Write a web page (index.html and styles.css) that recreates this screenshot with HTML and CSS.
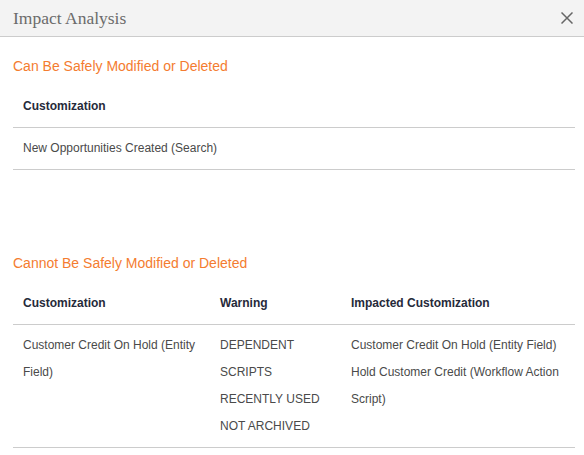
FILE: index.html
```html
<!DOCTYPE html>
<html>
<head>
<meta charset="utf-8">
<link rel="stylesheet" href="styles.css">
</head>
<body>
<div class="dialog">
  <div class="dialog-header">
    <span class="dialog-title">Impact Analysis</span>
    <button class="close-btn" aria-label="Close">
      <svg width="12" height="12" viewBox="0 0 12 12"><path d="M0.5 0.5 L11.5 11.5 M11.5 0.5 L0.5 11.5" stroke="#666" stroke-width="1.5" fill="none"/></svg>
    </button>
  </div>
  <div class="dialog-body">
    <section class="section">
      <h2 class="section-title">Can Be Safely Modified or Deleted</h2>
      <table class="grid">
        <thead><tr><th>Customization</th></tr></thead>
        <tbody><tr><td>New Opportunities Created (Search)</td></tr></tbody>
      </table>
    </section>
    <section class="section section-gap">
      <h2 class="section-title">Cannot Be Safely Modified or Deleted</h2>
      <table class="grid fixed">
        <colgroup><col class="c1"><col class="c2"><col class="c3"></colgroup>
        <thead><tr><th>Customization</th><th>Warning</th><th>Impacted Customization</th></tr></thead>
        <tbody><tr>
          <td>Customer Credit On Hold (Entity Field)</td>
          <td>DEPENDENT<br>SCRIPTS<br>RECENTLY USED<br>NOT ARCHIVED</td>
          <td>Customer Credit On Hold (Entity Field)<br>Hold Customer Credit (Workflow Action Script)</td>
        </tr></tbody>
      </table>
    </section>
  </div>
</div>
</body>
</html>
```
FILE: styles.css
```css
html, body { margin: 0; padding: 0; background: #fff; }
body { font-family: "Liberation Sans", Arial, sans-serif; }
.dialog { width: 584px; height: 455px; overflow: hidden; }
.dialog-header {
  height: 36px;
  background: #f3f3f3;
  border-bottom: 1px solid #cccccc;
  display: flex;
  align-items: center;
  justify-content: space-between;
  padding: 0 11px 0 13px;
}
.dialog-title {
  font-family: "Liberation Serif", "Times New Roman", serif;
  font-size: 17.5px;
  color: #6b6b6b;
  line-height: 20px;
  padding-bottom: 1px;
}
.close-btn {
  border: 0; background: none; padding: 0; width: 12px; height: 12px;
  display: flex;
}
.dialog-body { padding: 19px 9px 0 13px; }
.section-title {
  margin: 0;
  font-size: 14px;
  font-weight: normal;
  line-height: 20px;
  color: #f47c30;
}
.section-gap { margin-top: 83px; }
.grid { width: 562px; border-collapse: collapse; margin-top: 7px; }
.grid.fixed { table-layout: fixed; }
.c1 { width: 197px; }
.c2 { width: 131px; }
.c3 { width: 234px; }
.grid th {
  text-align: left;
  font-size: 12px;
  font-weight: bold;
  color: #262a3a;
  padding: 13px 10px 11px;
  line-height: 20px;
  border-bottom: 1px solid #cccccc;
}
.grid td {
  font-size: 12px;
  color: #4a4a4a;
  padding: 7px 10px;
  line-height: 27px;
  vertical-align: top;
  border-bottom: 1px solid #cccccc;
}
```
